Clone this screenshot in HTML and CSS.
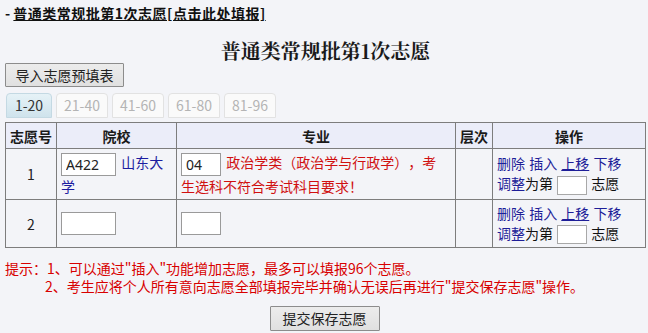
FILE: index.html
```html
<!DOCTYPE html>
<html lang="zh-CN">
<head>
<meta charset="utf-8">
<title>普通类常规批第1次志愿</title>
<link rel="stylesheet" href="styles.css">
</head>
<body>
<div class="page">
  <div class="top-line">- <a class="top-link" href="#">普通类常规批第1次志愿[点击此处填报]</a></div>
  <h1 class="title">普通类常规批第1次志愿</h1>
  <button class="btn btn-import" type="button">导入志愿预填表</button>
  <ul class="tabs">
    <li class="tab tab-active">1-20</li>
    <li class="tab">21-40</li>
    <li class="tab">41-60</li>
    <li class="tab">61-80</li>
    <li class="tab">81-96</li>
  </ul>
  <table class="grid">
    <colgroup>
      <col class="c-no"><col class="c-school"><col class="c-major"><col class="c-level"><col class="c-op">
    </colgroup>
    <thead>
      <tr><th>志愿号</th><th>院校</th><th>专业</th><th>层次</th><th>操作</th></tr>
    </thead>
    <tbody>
      <tr class="row-1">
        <td class="center">1</td>
        <td><input class="inp inp-school" type="text" value="A422"> <a class="school" href="#">山东大学</a></td>
        <td class="major"><input class="inp inp-major" type="text" value="04"> <span class="warn">政治学类（政治学与行政学），考生选科不符合考试科目要求！</span></td>
        <td></td>
        <td class="ops">
          <div><a href="#">删除</a> <a href="#">插入</a> <a class="u" href="#">上移</a> <a href="#">下移</a></div>
          <div><a href="#">调整</a>为第 <input class="inp inp-pos" type="text"> 志愿</div>
        </td>
      </tr>
      <tr class="row-2">
        <td class="center">2</td>
        <td><input class="inp inp-school" type="text"></td>
        <td class="major"><input class="inp inp-major" type="text"></td>
        <td></td>
        <td class="ops">
          <div><a href="#">删除</a> <a href="#">插入</a> <a class="u" href="#">上移</a> <a href="#">下移</a></div>
          <div><a href="#">调整</a>为第 <input class="inp inp-pos" type="text"> 志愿</div>
        </td>
      </tr>
    </tbody>
  </table>
  <div class="tips">
    <div>提示：1、可以通过"插入"功能增加志愿，最多可以填报96个志愿。</div>
    <div class="tip-indent">2、考生应将个人所有意向志愿全部填报完毕并确认无误后再进行"提交保存志愿"操作。</div>
  </div>
  <div class="submit-row">
    <button class="btn btn-submit" type="button">提交保存志愿</button>
  </div>
</div>
</body>
</html>
```
FILE: styles.css
```css
html, body {
  margin: 0;
  padding: 0;
  background: #f3f4f8;
}
body {
  font-family: "Noto Sans CJK SC", "Noto Sans", sans-serif;
  font-size: 14px;
  color: #222;
  text-spacing-trim: space-all;
}
.page {
  padding: 4px 4px 0 5px;
}
.top-line {
  line-height: 18px;
  font-weight: bold;
  color: #111;
}
.top-link {
  color: #111;
  text-decoration: underline;
  letter-spacing: 0.5px;
}
.title {
  margin: 17px 0 0;
  text-align: center;
  font-family: "Noto Serif CJK SC", "Noto Sans CJK SC", serif;
  font-size: 20px;
  line-height: 24px;
  font-weight: bold;
  color: #1a1a1a;
  padding-left: 2px;
}
.btn {
  display: block;
  font-family: "Noto Sans CJK SC", sans-serif;
  font-size: 14px;
  color: #222;
  background: linear-gradient(#ececec, #e0e0e0);
  border: 1px solid #8c8c8c;
  border-radius: 1px;
  padding: 0;
  margin: 0;
}
.btn-import {
  width: 119px;
  height: 24px;
  line-height: 22px;
}
.tabs {
  display: flex;
  gap: 4px;
  list-style: none;
  margin: 6px 0 0;
  padding: 0 0 0 1px;
}
.tab {
  height: 25px;
  box-sizing: border-box;
  line-height: 23px;
  padding: 0 7px;
  border: 1px solid #e2e2e2;
  border-radius: 4px 4px 0 0;
  background: #fafafa;
  color: #b4b4b4;
  font-size: 14px;
  min-width: 52px;
  text-align: center;
}
.tab-active {
  background: linear-gradient(#e6f2f7, #cfe3ec);
  border-color: #c4d9e3;
  color: #333;
  min-width: 46px;
}
.grid {
  margin-top: 4px;
  width: 640px;
  border-collapse: collapse;
  table-layout: fixed;
}
.c-no { width: 51px; }
.c-school { width: 120px; }
.c-major { width: 279px; }
.c-level { width: 37px; }
.c-op { width: 153px; }
.grid th, .grid td {
  border: 1px solid #7d7d7d;
  padding: 3px 4px;
  line-height: 20px;
}
.grid th {
  background: #ebedf9;
  font-weight: bold;
  text-align: center;
  padding: 2px 2px;
  height: 21px;
  color: #1a1a1a;
}
.grid td {
  vertical-align: middle;
}
.grid td.major {
  padding-right: 10px;
}
.center {
  text-align: center;
}
.row-1 td {
  height: 43px;
}
.row-2 td {
  height: 37px;
}
.inp {
  box-sizing: border-box;
  height: 23px;
  border: 1px solid #9a9a9a;
  background: #fff;
  font-family: "Noto Sans", sans-serif;
  font-size: 14px;
  color: #222;
  padding: 0 4px;
  margin: 0 2px 0 0;
  vertical-align: middle;
}
.inp-school { width: 55px; }
.inp-major { width: 40px; }
.inp-pos {
  width: 30px;
  height: 19px;
  margin: 0;
  border-color: #a8a8a8;
}
.school {
  color: #1c1ca0;
  text-decoration: none;
}
.warn {
  color: #d01010;
}
.ops {
  color: #111;
  padding-left: 4px;
  word-spacing: 1px;
}
.ops a {
  color: #1e1e98;
  text-decoration: none;
}
.ops a.u {
  text-decoration: underline;
}
.tips {
  margin-top: 11px;
  color: #d80000;
  line-height: 18px;
  font-size: 14px;
}
.tip-indent {
  padding-left: 40px;
}
.submit-row {
  display: flex;
  justify-content: center;
  margin-top: 11px;
}
.btn-submit {
  width: 110px;
  height: 25px;
  line-height: 23px;
}
```
